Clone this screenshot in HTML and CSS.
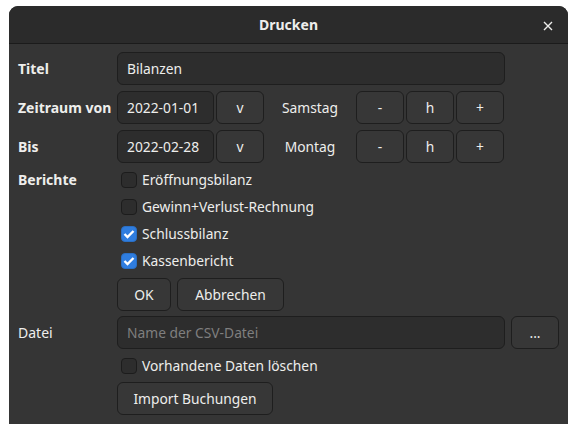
FILE: index.html
```html
<!DOCTYPE html>
<html lang="de">
<head>
<meta charset="utf-8">
<title>Drucken</title>
<link rel="stylesheet" href="styles.css">
</head>
<body>
<div class="window">
  <div class="titlebar">
    <span class="title">Drucken</span>
    <span class="close">
      <svg width="10" height="10" viewBox="0 0 10 10"><path d="M1 1 L9 9 M9 1 L1 9" stroke="#eeeeec" stroke-width="1.4" fill="none"/></svg>
    </span>
  </div>
  <div class="content">
    <div class="row">
      <div class="label bold">Titel</div>
      <div class="entry wide">Bilanzen</div>
    </div>
    <div class="row">
      <div class="label bold">Zeitraum von</div>
      <div class="entry date">2022-01-01</div>
      <button class="btn small last">v</button>
      <div class="day">Samstag</div>
      <button class="btn small">-</button>
      <button class="btn small">h</button>
      <button class="btn small">+</button>
    </div>
    <div class="row">
      <div class="label bold">Bis</div>
      <div class="entry date">2022-02-28</div>
      <button class="btn small last">v</button>
      <div class="day">Montag</div>
      <button class="btn small">-</button>
      <button class="btn small">h</button>
      <button class="btn small">+</button>
    </div>
    <div class="reports">
      <div class="label bold rlabel">Berichte</div>
      <div class="checks">
        <label class="check"><span class="box"></span>Eröffnungsbilanz</label>
        <label class="check"><span class="box"></span>Gewinn+Verlust-Rechnung</label>
        <label class="check"><span class="box on"><svg width="12" height="10" viewBox="0 0 12 10"><path d="M1.5 5 L4.5 8 L10.5 2" stroke="#fff" stroke-width="2.4" fill="none"/></svg></span>Schlussbilanz</label>
        <label class="check"><span class="box on"><svg width="12" height="10" viewBox="0 0 12 10"><path d="M1.5 5 L4.5 8 L10.5 2" stroke="#fff" stroke-width="2.4" fill="none"/></svg></span>Kassenbericht</label>
        <div class="actions">
          <button class="btn ok">OK</button>
          <button class="btn cancel">Abbrechen</button>
        </div>
      </div>
    </div>
    <div class="row datei">
      <div class="label">Datei</div>
      <div class="entry wide placeholder">Name der CSV-Datei</div>
      <button class="btn dots">...</button>
    </div>
    <div class="row importrow">
      <div class="label"></div>
      <div class="checks">
        <label class="check"><span class="box"></span>Vorhandene Daten löschen</label>
        <div class="actions">
          <button class="btn import">Import Buchungen</button>
        </div>
      </div>
    </div>
  </div>
</div>
</body>
</html>
```

FILE: styles.css
```css
* { box-sizing: border-box; }
html, body { margin: 0; padding: 0; background: #ffffff; }
body {
  font-family: "Noto Sans", "Open Sans", sans-serif;
  font-size: 13.8px;
  color: #eeeeec;
}
.window {
  margin: 6px 0 0 9px;
  width: 559px;
  height: 418px;
  background: #353535;
  border-radius: 9px 9px 0 0;
  overflow: hidden;
}
.titlebar {
  height: 38px;
  background: #2b2b2b;
  border-bottom: 1px solid #1b1b1b;
  display: flex;
  align-items: center;
  justify-content: center;
  position: relative;
}
.title { font-weight: bold; font-size: 14px; }
.close {
  position: absolute;
  right: 15px;
  top: 15px;
  width: 10px;
  height: 10px;
  display: flex;
}
.content { padding: 8px 9px 8px 9px; }
.row {
  display: flex;
  align-items: center;
  height: 33px;
  margin-bottom: 6px;
}
.label { width: 99px; flex: none; font-size: 14px; }
.bold { font-weight: bold; }
.entry {
  height: 33px;
  background: #2d2d2d;
  border: 1px solid #1e1e1e;
  border-radius: 6px;
  padding: 0 9px;
  display: flex;
  align-items: center;
}
.entry.wide { width: 388px; }
.entry.date { width: 97px; margin-right: 2px; }
.placeholder { color: #7f7f7f; }
.btn {
  font: inherit;
  color: #eeeeec;
  height: 33px;
  background: #373737;
  border: 1px solid #1e1e1e;
  border-radius: 6px;
  padding: 0;
  display: flex;
  align-items: center;
  justify-content: center;
}
.btn.small { width: 48px; margin-right: 2px; }
.btn.small.last { margin-right: 0; }
.day { width: 92px; text-align: center; }
.reports { display: flex; margin-top: -3px; }
.rlabel { height: 27px; display: flex; align-items: center; }
.checks { display: flex; flex-direction: column; }
.check {
  height: 27px;
  display: flex;
  align-items: center;
  padding-left: 4px;
}
.box {
  width: 16px;
  height: 16px;
  border: 1px solid #1c1c1c;
  background: #2d2d2d;
  border-radius: 4px;
  margin-right: 5px;
  display: flex;
  align-items: center;
  justify-content: center;
}
.box.on { background: #2f7ddf; border-color: #2a6fc4; }
.actions { display: flex; gap: 6px; margin-top: 4px; }
.btn.ok { width: 54px; }
.btn.cancel { width: 107px; }
.row.datei { margin-top: 5px; margin-bottom: 3px; }
.btn.dots { width: 48px; margin-left: 6px; }
.importrow { height: auto; align-items: flex-start; }
.btn.import { width: 156px; margin-top: 3px; }
.importrow .actions { margin-top: 0; }
```
